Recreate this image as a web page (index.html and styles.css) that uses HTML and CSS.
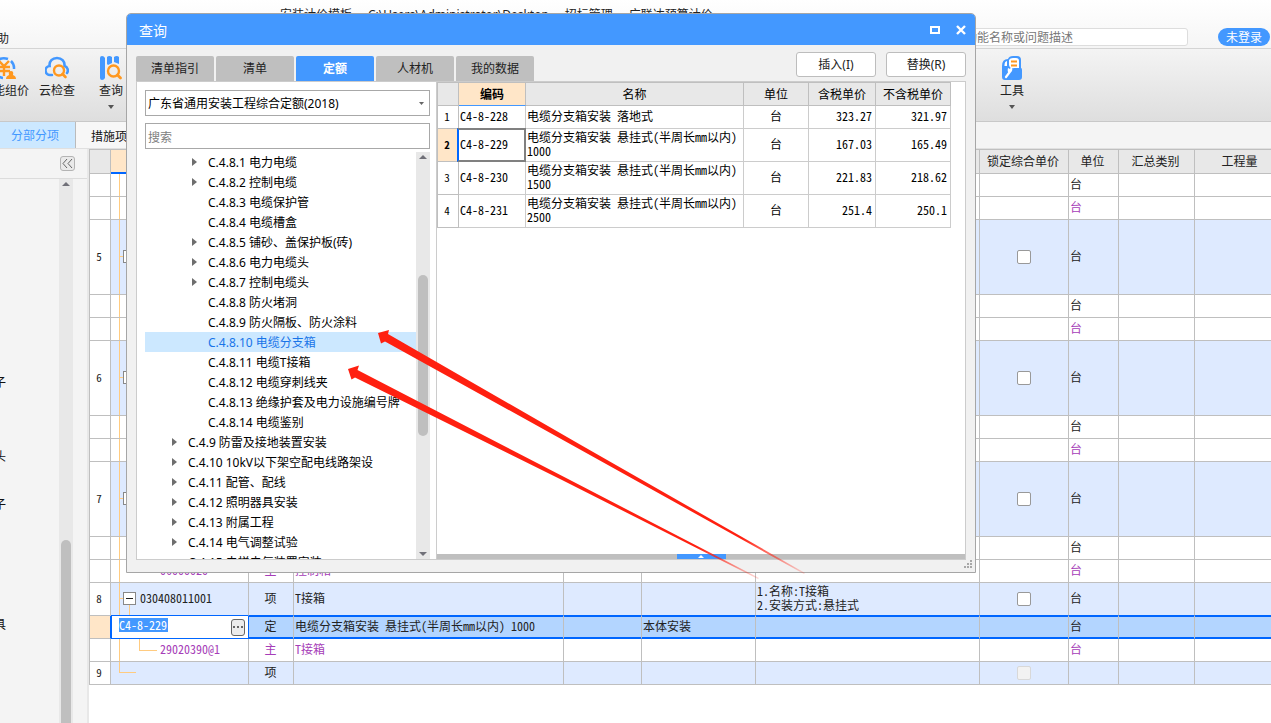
FILE: index.html
```html
<!DOCTYPE html>
<html lang="zh-CN">
<head>
<meta charset="utf-8">
<title>安装计价模板</title>
<link rel="stylesheet" href="styles.css">
</head>
<body>
<header class="titlebar">
  <div class="doc-title"><span>安装计价模板</span><span>C:\Users\Administrator\Desktop</span><span>招标管理</span><span>广联达预算计价</span></div>
  <div class="menubar">
    <div class="menu-clip"><a class="menu-link" href="#">帮助</a></div>
    <input class="fn-search" type="text" aria-label="功能搜索" placeholder="搜索功能名称或问题描述">
    <button class="login" type="button">未登录</button>
  </div>
</header>
<nav class="toolbar">
  <button class="tool tool-first" type="button">
    <svg width="24" height="24" viewBox="0 0 24 24" fill="none"><path d="M3 6a11 11 0 0 1 12-3M18 5a10 10 0 0 1 3 8M3 18a10 10 0 0 0 7 4" stroke="#4398ff" stroke-width="2.5"/><path d="M6 5l5 5 5-5M5 11h12M5 15h12M11 10v10" stroke="#ff981f" stroke-width="2.4"/><path d="M13 23q0-3 3-4-1-4 2-4t2 4q3 1 3 4z" fill="#ff981f"/></svg>
    <span>智能组价</span>
  </button>
  <button class="tool" type="button">
    <svg width="24" height="24" viewBox="0 0 24 24" fill="none"><path d="M7 19H5.500A4.500 4.500 0 0 1 4.600 10C4 5 7.500 2 12 2s8 3 7.500 8a4.600 4.600 0 0 1 2.500 7" stroke="#4398ff" stroke-width="2.600" stroke-linecap="round"/><circle cx="14" cy="14.500" r="5" stroke="#ff981f" stroke-width="2.400"/><path d="M17.500 18l3 3" stroke="#ff981f" stroke-width="2.600" stroke-linecap="round"/></svg>
    <span>云检查</span>
  </button>
  <button class="tool tool-query" type="button">
    <svg width="24" height="24" viewBox="0 0 24 24" fill="none"><path d="M1 2q0-2 2-2t3 2v20q-1 2-3 2t-2-2zM8 1q2-2 5 0v6l-4 2-1-1zM15 1q3-2 5 0v7l-5-2z" fill="#4398ff"/><circle cx="14.500" cy="15" r="5.500" stroke="#ff981f" stroke-width="2.400"/><path d="M18.500 19l3 3" stroke="#ff981f" stroke-width="2.800" stroke-linecap="round"/></svg>
    <span>查询</span>
    <svg class="drop" width="6" height="4" viewBox="0 0 6 4"><path d="M0 0h6L3 4z" fill="#555"/></svg>
  </button>
  <button class="tool tool-kit" type="button">
    <svg width="24" height="24" viewBox="0 0 24 24" fill="none"><path d="M2 10q0-7 6-7 1-3 5-3h4q4 0 4 4v8q1 0 1 2v7q0 3-3 3H5q-3 0-3-3z" fill="#4398ff"/><path d="M9 4q1-2 4-2h3q3 0 3 3v7h-5q-4 1-5-3z" fill="#fff"/><path d="M4.500 9q0-3.500 2.500-4v5H4.500z" fill="#fff"/><path d="M11 5.500h6M11 9.500h6" stroke="#ff981f" stroke-width="2"/><path d="M6 21l4.500-6" stroke="#fff" stroke-width="2.200" stroke-linecap="round"/><path d="M8 12l2 1 1-2q2 1 1 4l-3 2q-2-1-1-5z" fill="#fff"/></svg>
    <span>工具</span>
    <svg class="drop" width="6" height="4" viewBox="0 0 6 4"><path d="M0 0h6L3 4z" fill="#555"/></svg>
  </button>
</nav>
<nav class="viewtabs">
  <a class="viewtab active" href="#">分部分项</a>
  <a class="viewtab" href="#">措施项目</a>
</nav>
<main class="work">
  <aside class="side">
    <div class="side-head">
      <button class="collapse" type="button" aria-label="收起"><svg width="11" height="9" viewBox="0 0 11 9" fill="none"><path d="M5 0L1 4.500 5 9M10 0L6 4.500 10 9" stroke="#666"/></svg></button>
    </div>
    <div class="side-body">
      <ul class="side-list">
        <li class="gap-a">端子</li>
        <li class="gap-b">接头</li>
        <li class="gap-c">端子</li>
        <li class="gap-d">灯具</li>
      </ul>
      <div class="side-scroll">
        <svg width="8" height="4" viewBox="0 0 8 4"><path d="M0 4h8L4 0z" fill="#707078"/></svg>
        <div class="side-thumb"></div>
      </div>
    </div>
  </aside>
  <section class="sheet">
    <table class="grid">
      <colgroup><col class="g1"><col class="g2"><col class="g3"><col class="g4"><col class="g5"><col class="g6"><col class="g7"><col class="g8"><col class="g9"><col class="g10"><col></colgroup>
      <thead>
        <tr><th></th><th class="current"></th><th></th><th></th><th></th><th></th><th></th><th>锁定综合单价</th><th>单位</th><th>汇总类别</th><th>工程量</th></tr>
      </thead>
      <tbody>
        <tr><td></td><td class="code"></td><td></td><td></td><td></td><td></td><td></td><td></td><td>台</td><td></td><td></td></tr>
        <tr class="main-mat"><td></td><td class="code"></td><td></td><td></td><td></td><td></td><td></td><td></td><td>台</td><td></td><td></td></tr>
        <tr class="item tall"><td>5</td><td class="code"><div class="node"><button class="minus" type="button" aria-label="折叠"></button></div></td><td></td><td></td><td></td><td></td><td></td><td class="tick"><input type="checkbox" aria-label="锁定综合单价"></td><td>台</td><td></td><td></td></tr>
        <tr><td></td><td class="code"></td><td></td><td></td><td></td><td></td><td></td><td></td><td>台</td><td></td><td></td></tr>
        <tr class="main-mat"><td></td><td class="code"></td><td></td><td></td><td></td><td></td><td></td><td></td><td>台</td><td></td><td></td></tr>
        <tr class="item tall"><td>6</td><td class="code"><div class="node"><button class="minus" type="button" aria-label="折叠"></button></div></td><td></td><td></td><td></td><td></td><td></td><td class="tick"><input type="checkbox" aria-label="锁定综合单价"></td><td>台</td><td></td><td></td></tr>
        <tr><td></td><td class="code"></td><td></td><td></td><td></td><td></td><td></td><td></td><td>台</td><td></td><td></td></tr>
        <tr class="main-mat"><td></td><td class="code"></td><td></td><td></td><td></td><td></td><td></td><td></td><td>台</td><td></td><td></td></tr>
        <tr class="item tall"><td>7</td><td class="code"><div class="node"><button class="minus" type="button" aria-label="折叠"></button></div></td><td></td><td></td><td></td><td></td><td></td><td class="tick"><input type="checkbox" aria-label="锁定综合单价"></td><td>台</td><td></td><td></td></tr>
        <tr><td></td><td class="code"></td><td></td><td></td><td></td><td></td><td></td><td></td><td>台</td><td></td><td></td></tr>
        <tr class="main-mat"><td></td><td class="code deep">06000020</td><td class="mid">主</td><td>控制箱</td><td></td><td></td><td></td><td></td><td>台</td><td></td><td></td></tr>
        <tr class="item two-line above-current"><td>8</td><td class="code stem"><div class="node"><button class="minus" type="button" aria-label="折叠"></button>030408011001</div></td><td class="mid">项</td><td>T接箱</td><td></td><td></td><td>1.名称:T接箱<br>2.安装方式:悬挂式</td><td class="tick"><input type="checkbox" aria-label="锁定综合单价"></td><td>台</td><td></td><td></td></tr>
        <tr class="picked"><td></td><td class="editing"><div class="editor"><input type="text" aria-label="编码" value="C4-8-229"><button type="button" aria-label="更多"><i></i><i></i><i></i></button></div></td><td class="mid">定</td><td>电缆分支箱安装 悬挂式(半周长mm以内) 1000</td><td></td><td>本体安装</td><td></td><td></td><td>台</td><td></td><td></td></tr>
        <tr class="main-mat"><td></td><td class="code deep leaf">29020390@1</td><td class="mid">主</td><td>T接箱</td><td></td><td></td><td></td><td></td><td>台</td><td></td><td></td></tr>
        <tr class="item"><td>9</td><td class="code last"></td><td class="mid">项</td><td></td><td></td><td></td><td></td><td class="tick"><input type="checkbox" aria-label="锁定综合单价" disabled></td><td></td><td></td><td></td></tr>
      </tbody>
    </table>
  </section>
</main>

<div class="dialog" role="dialog" aria-label="查询">
  <div class="dlg-title">
    <span>查询</span>
    <button class="winbtn" type="button" aria-label="最大化"><svg width="10" height="8" viewBox="0 0 10 8"><path d="M1 1h8v6H1z" fill="none" stroke="#fff" stroke-width="2"/></svg></button>
    <button class="winbtn" type="button" aria-label="关闭"><svg width="10" height="10" viewBox="0 0 10 10"><path d="M1 1l8 8M9 1L1 9" stroke="#fff" stroke-width="2.400"/></svg></button>
  </div>
  <div class="dlg-bar">
    <div class="dlg-tabs">
      <button type="button">清单指引</button>
      <button type="button">清单</button>
      <button type="button" class="on">定额</button>
      <button type="button">人材机</button>
      <button type="button">我的数据</button>
    </div>
    <div class="dlg-actions">
      <button type="button">插入(I)</button>
      <button type="button">替换(R)</button>
    </div>
  </div>
  <div class="dlg-panel">
    <div class="pick">
      <div class="combo">
        <select aria-label="定额库"><option>广东省通用安装工程综合定额(2018)</option></select>
        <svg width="5" height="3" viewBox="0 0 5 3"><path d="M0 0h5L2.500 3z" fill="#666"/></svg>
      </div>
      <input class="find" type="text" aria-label="搜索" placeholder="搜索">
      <div class="treebox">
        <ul class="tree">
          <li class="l3 fold">C.4.8.1 电力电缆</li>
          <li class="l3 fold">C.4.8.2 控制电缆</li>
          <li class="l3">C.4.8.3 电缆保护管</li>
          <li class="l3">C.4.8.4 电缆槽盒</li>
          <li class="l3 fold">C.4.8.5 铺砂、盖保护板(砖)</li>
          <li class="l3 fold">C.4.8.6 电力电缆头</li>
          <li class="l3 fold">C.4.8.7 控制电缆头</li>
          <li class="l3">C.4.8.8 防火堵洞</li>
          <li class="l3">C.4.8.9 防火隔板、防火涂料</li>
          <li class="l3 sel">C.4.8.10 电缆分支箱</li>
          <li class="l3">C.4.8.11 电缆T接箱</li>
          <li class="l3">C.4.8.12 电缆穿刺线夹</li>
          <li class="l3">C.4.8.13 绝缘护套及电力设施编号牌</li>
          <li class="l3">C.4.8.14 电缆鉴别</li>
          <li class="l2 fold">C.4.9 防雷及接地装置安装</li>
          <li class="l2 fold">C.4.10 10kV以下架空配电线路架设</li>
          <li class="l2 fold">C.4.11 配管、配线</li>
          <li class="l2 fold">C.4.12 照明器具安装</li>
          <li class="l2 fold">C.4.13 附属工程</li>
          <li class="l2 fold">C.4.14 电气调整试验</li>
          <li class="l2">C.4.15 电梯电气装置安装</li>
        </ul>
        <div class="scroll">
          <svg width="8" height="4" viewBox="0 0 8 4"><path d="M0 4h8L4 0z" fill="#707078"/></svg>
          <div class="thumb"></div>
          <svg width="8" height="4" viewBox="0 0 8 4"><path d="M0 0h8L4 4z" fill="#707078"/></svg>
        </div>
      </div>
    </div>
    <div class="result">
      <table class="quota">
        <colgroup><col class="q1"><col class="q2"><col class="q3"><col class="q4"><col class="q5"><col class="q6"></colgroup>
        <thead><tr><th></th><th class="current">编码</th><th>名称</th><th>单位</th><th>含税单价</th><th>不含税单价</th></tr></thead>
        <tbody>
          <tr><th>1</th><td>C4-8-228</td><td>电缆分支箱安装 落地式</td><td>台</td><td>323.27</td><td>321.97</td></tr>
          <tr class="two-line"><th class="current">2</th><td class="cursor">C4-8-229</td><td>电缆分支箱安装 悬挂式(半周长mm以内) 1000</td><td>台</td><td>167.03</td><td>165.49</td></tr>
          <tr class="two-line"><th>3</th><td>C4-8-230</td><td>电缆分支箱安装 悬挂式(半周长mm以内) 1500</td><td>台</td><td>221.83</td><td>218.62</td></tr>
          <tr class="two-line"><th>4</th><td>C4-8-231</td><td>电缆分支箱安装 悬挂式(半周长mm以内) 2500</td><td>台</td><td>251.4</td><td>250.1</td></tr>
        </tbody>
      </table>
      <div class="splitbar"><button type="button" aria-label="展开"><svg width="6" height="3" viewBox="0 0 6 3"><path d="M0 3h6L3 0z" fill="#fff"/></svg></button></div>
    </div>
  </div>
  <svg class="grip" width="8" height="8" viewBox="0 0 8 8" fill="#a8a8a8"><path d="M6 0h2v2H6zM3 3h2v2H3zM6 3h2v2H6zM0 6h2v2H0zM3 6h2v2H3zM6 6h2v2H6z"/></svg>
</div>

<svg class="marks">
  <defs>
    <linearGradient id="fade-a" gradientUnits="userSpaceOnUse" x1="378" y1="333" x2="805" y2="574"><stop offset="0.850" stop-color="#ff2010"/><stop offset="1" stop-color="#ff2010" stop-opacity="0.150"/></linearGradient>
    <linearGradient id="fade-b" gradientUnits="userSpaceOnUse" x1="348" y1="369" x2="759" y2="579"><stop offset="0.850" stop-color="#ff2010"/><stop offset="1" stop-color="#ff2010" stop-opacity="0.150"/></linearGradient>
  </defs>
  <path fill="url(#fade-a)" d="M378 333L389 330 388 334 580 444.500 805 573 804 574 580 449.500 385 341.500 381 343.500z"/>
  <path fill="url(#fade-b)" d="M348 369L359 365.500 357.500 370 570 480 759 578 758 579 562 480 355 377.500 351.500 379.500z"/>
</svg>
</body>
</html>
```

FILE: styles.css
```css
* { box-sizing: border-box; }

html, body { height: 100%; }

body {
  margin: 0;
  display: flex;
  flex-direction: column;
  position: relative;
  overflow: hidden;
  background: #fff;
  color: #222;
  font: 12px/16px "Noto Sans", "Noto Sans CJK SC", sans-serif;
}

button, input, select {
  font: inherit;
  color: inherit;
  margin: 0;
  padding: 0;
  border: 0;
  background: none;
}

a { color: inherit; text-decoration: none; }
ul { list-style: none; margin: 0; padding: 0; }
svg { display: block; flex: none; }

/* title area */
.titlebar {
  flex: none;
  height: 49px;
  background: linear-gradient(#fff, #f5f5f5);
  border-bottom: 1px solid #d4d4d4;
}
.doc-title { display: flex; gap: 16px; padding: 7px 0 0 280px; height: 28px; white-space: nowrap; }
.menubar { display: flex; height: 18px; padding-right: 1px; }
.menu-clip { display: flex; justify-content: flex-end; width: 9px; padding-top: 3px; overflow: hidden; }
.menu-link { flex: none; }
.fn-search {
  width: 252px;
  margin: 0 30px 0 auto;
  padding: 2px 0 0 4px;
  border: 1px solid #ddd;
  border-radius: 3px;
  background: #fff;
}
.fn-search::placeholder { color: #777; opacity: 1; }
.login { width: 52px; padding-top: 2px; border-radius: 9px; background: #4398ff; color: #fff; }

/* ribbon */
.toolbar {
  flex: none;
  display: flex;
  align-items: flex-start;
  height: 73px;
  padding-top: 7px;
  background: linear-gradient(#f4f4f4, #dedede);
  border-bottom: 1px solid #c8c8c8;
}
.tool {
  display: flex;
  flex-direction: column;
  align-items: center;
  margin-right: 10px;
  white-space: nowrap;
}
.tool span { margin-top: 3px; }
.tool-first { margin-left: -19px; }
.tool-query { margin-left: 14px; }
.tool-kit { margin: 0 247px 0 auto; }
.drop { margin-top: 6px; }

.viewtabs {
  flex: none;
  display: flex;
  height: 27px;
  background: #f4f4f4;
  border-bottom: 1px solid #e0e0e0;
}
.viewtab { padding: 7px 15px 0; color: #111; border-right: 1px solid #bbb; background: #f7f7f7; }
.viewtab.active { width: 76px; padding: 6px 0 0 11px; background: #cce8ff; color: #4398ff; }

/* side list */
.work { flex: 1; min-height: 0; display: flex; }
.side {
  flex: none;
  display: flex;
  flex-direction: column;
  width: 89px;
  background: #f4f4f4;
  border-right: 2px solid #e8e8e8;
}
.side-head {
  display: flex;
  justify-content: flex-end;
  height: 30px;
  padding: 7px 12px 0 0;
  border-bottom: 1px solid #dcdcdc;
}
.collapse {
  display: flex;
  align-items: center;
  justify-content: center;
  width: 15px;
  height: 15px;
  border: 1px solid #b4b4b4;
  border-radius: 3px;
  background: #eaeaea;
}
.side-body { flex: 1; display: flex; justify-content: space-between; padding-right: 14px; }
.side-list { width: 6px; overflow: hidden; color: #111; }
.side-list li { display: flex; justify-content: flex-end; white-space: nowrap; }
.gap-a { margin-top: 196px; }
.gap-b { margin-top: 58px; }
.gap-c { margin-top: 32px; }
.gap-d { margin-top: 104px; }
.side-scroll {
  display: flex;
  flex-direction: column;
  align-items: center;
  width: 14px;
  padding-top: 3px;
  background: #e8e8e8;
}
.side-thumb { flex: 1; width: 10px; margin-top: 354px; border-radius: 5px 5px 0 0; background: #bfbfbf; }

/* both tables */
.sheet { flex: 1; min-width: 0; overflow: hidden; }
table {
  table-layout: fixed;
  border-collapse: separate;
  border-spacing: 0;
  font: 12px/14px "Noto Sans Mono CJK SC", "Noto Sans CJK SC", monospace;
  font-variant-ligatures: none;
  font-feature-settings: "ccmp" 0, "liga" 0, "dlig" 0;
}
th, td { padding: 0; height: 23px; text-align: left; }
th { font-weight: 400; text-align: center; }
.two-line td, .two-line th { height: 33px; }

.grid { width: calc(100% + 16px); border: solid #bfbfbf; border-width: 1px 0 0 1px; }
.grid th, .grid td { border: solid #bfbfbf; border-width: 0 1px 1px 0; }
.grid th { height: 24px; padding: 0 2px 2px 0; background: #e8e8e8; }
.grid td { padding: 0 0 2px 1px; }
.grid td:first-child { padding: 0 2px 2px 0; text-align: center; font-size: 11px; }
.grid th.current { background: #ffe6c8; border-bottom: 2px solid #0066ff; }
.g1 { width: 21px; }
.g2 { width: 138px; }
.g3 { width: 45px; }
.g4 { width: 270px; }
.g5 { width: 78px; }
.g6 { width: 114px; }
.g7 { width: 224px; }
.g8 { width: 89px; }
.g9 { width: 50px; }
.g10 { width: 76px; }
.grid .mid { padding: 0 1px 2px 0; text-align: center; }
.grid .tick { padding: 0; }
.main-mat { color: #a63db8; }
.item td:not(:first-child) { background-color: #deeaff; }
.grid .tall td { height: 75px; }

.grid input[type="checkbox"] {
  appearance: none;
  display: block;
  width: 14px;
  height: 14px;
  margin: 0 auto;
  border: 1px solid #999;
  border-radius: 2px;
  background: #fff;
}
.grid input[type="checkbox"]:disabled { border-color: #d8d8d8; background: #f2f2f2; }

/* connector lines of the code column */
.grid td.code {
  position: relative;
  padding: 0 0 2px;
  background-image: linear-gradient(#ffcb80, #ffcb80);
  background-size: 1px 100%;
  background-position: 8px 0;
  background-repeat: no-repeat;
}
.grid td.code.last { background-size: 1px 11px; }
.grid td.code.deep { padding-left: 49px; }
.code.last::after, .code.leaf::after, .code.stem::after {
  content: "";
  position: absolute;
  border: 0 solid #ffcb80;
}
.code.last::after { left: 8px; top: 10px; width: 17px; border-top-width: 1px; }
.code.leaf::after { left: 28px; top: 0; width: 17px; height: 11px; border-width: 0 0 1px 1px; }
.code.stem::after { left: 18px; bottom: 0; height: 10px; border-left-width: 1px; }
.node { display: flex; align-items: center; gap: 4px; padding-left: 8px; }
.node::before { content: ""; width: 4px; height: 1px; margin-right: -4px; background: #ffcb80; }
.minus {
  display: flex;
  align-items: center;
  justify-content: center;
  width: 13px;
  height: 13px;
  border: 1px solid #888;
  background: #fff;
}
.minus::before { content: ""; width: 7px; height: 1px; background: #222; }

/* row being edited */
.above-current td:not(:first-child) { border-bottom-color: #0066ff; }
.picked td:not(:first-child) { background: #b3d5ff; border-bottom-color: #0066ff; box-shadow: inset 0 1px #0066ff, inset 0 -1px #0066ff; }
.picked td:first-child { background: #ffe6c8; border-right-color: #0066ff; }
.grid .picked td.editing { padding: 0; background: #fff; border-right-color: #0066ff; box-shadow: inset 1px 0 #0066ff; }
.editor { display: flex; align-items: center; justify-content: space-between; padding: 0 3px 0 8px; }
.editor input { width: 49px; height: 14px; margin-bottom: 4px; background: #4398ff; color: #fff; }
.editor button {
  display: flex;
  align-items: center;
  justify-content: center;
  gap: 2px;
  width: 14px;
  height: 17px;
  border: 1px solid #666;
  border-radius: 3px;
  background: #ececec;
}
.editor i { width: 2px; height: 2px; background: #666; }

/* query window */
.dialog {
  position: absolute;
  top: 13px;
  left: 126px;
  right: 295px;
  height: 560px;
  display: flex;
  flex-direction: column;
  border: 1px solid #a6a6a6;
  border-radius: 5px 5px 0 0;
  background: #f1f1f1;
  overflow: hidden;
}
.dlg-title {
  flex: none;
  display: flex;
  align-items: center;
  gap: 16px;
  height: 31px;
  padding: 0 9px 0 12px;
  background: #4398ff;
  color: #fff;
  font-size: 14px;
}
.dlg-title span { margin-right: auto; padding-top: 2px; }
.dlg-bar {
  flex: none;
  display: flex;
  justify-content: space-between;
  align-items: flex-end;
  height: 36px;
  padding: 0 9px;
}
.dlg-tabs { display: flex; gap: 2px; }
.dlg-tabs button { width: 78px; height: 25px; border-radius: 2px 2px 0 0; background: #bfbfbf; }
.dlg-tabs .on { background: #4398ff; color: #fff; font-weight: 700; }
.dlg-actions { display: flex; gap: 10px; padding-bottom: 4px; }
.dlg-actions button { width: 80px; height: 25px; border: 1px solid #bdbdbd; border-radius: 3px; background: #fff; }
.dlg-panel {
  flex: 1;
  min-height: 0;
  display: flex;
  margin: 0 9px 12px;
  border: 1px solid #ccc;
  background: #fff;
}
.grip { position: absolute; right: 3px; bottom: 4px; }

.pick { flex: none; display: flex; flex-direction: column; width: 299px; padding: 8px 6px 0 8px; color: #000; }
.combo { position: relative; flex: none; height: 26px; margin-bottom: 7px; }
.combo select { appearance: none; width: 100%; height: 26px; padding: 2px 0 0 2px; border: 1px solid #a8a8a8; background: #fff; }
.combo svg { position: absolute; right: 6px; top: 12px; }
.find { flex: none; height: 26px; margin-bottom: 3px; padding: 2px 0 0 2px; border: 1px solid #a8a8a8; background: #fff; }
.find::placeholder { color: #808080; opacity: 1; }
.treebox { flex: 1; min-height: 0; display: flex; }
.tree { flex: 1; overflow: hidden; }
.tree li { display: flex; align-items: center; height: 20px; padding-top: 2px; line-height: 18px; white-space: nowrap; }
.tree li::before {
  content: "";
  flex: none;
  border: 4px solid transparent;
  border-width: 4px 0 4px 5px;
  margin: 0 11px 2px 4px;
}
.tree .fold::before { border-left-color: #6e6e6e; }
.tree .l3 { padding-left: 43px; }
.tree .l2 { padding-left: 23px; }
.tree .sel { background: #cce8ff; color: #1874e8; }
.scroll {
  display: flex;
  flex-direction: column;
  align-items: center;
  width: 14px;
  padding: 3px 0;
  background: #e8e8e8;
}
.thumb { width: 10px; height: 161px; margin: 116px 0 auto; border-radius: 5px; background: #bfbfbf; }

.result { flex: 1; min-width: 0; display: flex; flex-direction: column; border-left: 1px solid #ccc; }
.quota { width: 514px; border: solid #bfbfbf; border-width: 1px 0 0 1px; color: #000; }
.quota th, .quota td { border: solid #ccc; border-width: 0 1px 1px 0; }
.quota th { border-color: #bfbfbf; }
.quota thead th { background: #e8e8e8; }
.quota tbody th { padding: 0 2px 2px 0; font-size: 11px; }
.quota th.current { background: #ffe6c8; font-weight: 700; }
.quota thead th.current { border-bottom-color: #4398ff; }
.quota td { padding: 0 1px 2px; }
.quota td:nth-child(4) { text-align: center; }
.quota td:nth-child(n+5) { padding-right: 3px; text-align: right; }
.quota .cursor { position: relative; }
.quota .cursor::after {
  content: "";
  position: absolute;
  inset: -1px -1px -1px -2px;
  border: 2px solid #808080;
  border-left-color: #0066ff;
}
.q1 { width: 21px; }
.q2 { width: 67px; }
.q3 { width: 218px; }
.q4 { width: 65px; }
.q5 { width: 67px; }
.q6 { width: 75px; }
.splitbar { display: flex; justify-content: center; height: 5px; margin-top: auto; background: #bfbfbf; }
.splitbar button { display: flex; align-items: center; justify-content: center; width: 49px; height: 5px; background: #4398ff; }

/* pointer strokes over the page */
.marks { position: absolute; inset: 0; width: 100%; height: 100%; pointer-events: none; }
```
